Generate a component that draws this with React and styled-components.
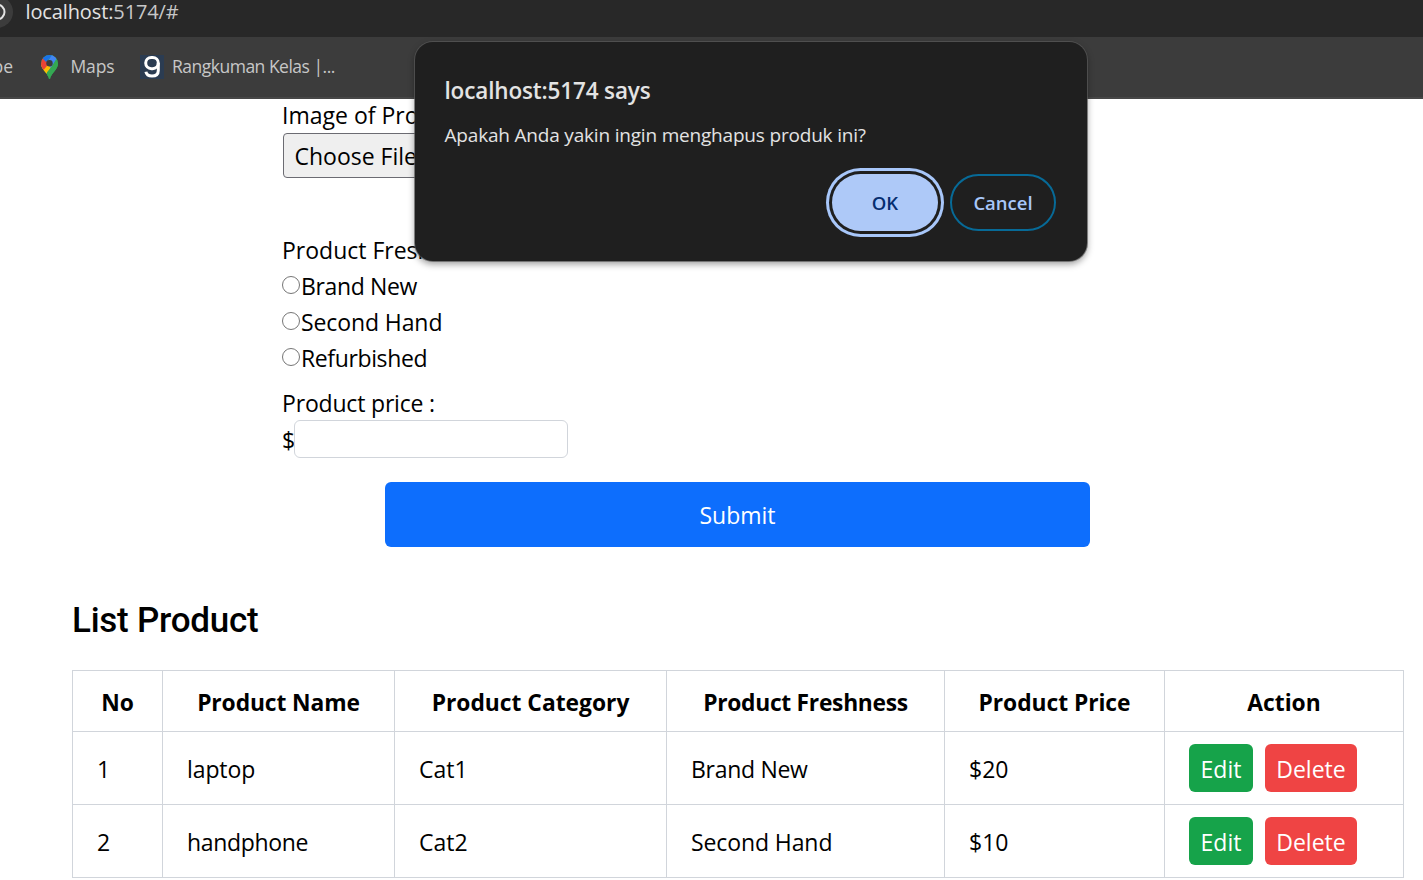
import React from "react";
import styled, { createGlobalStyle } from "styled-components";

const Global = createGlobalStyle`
  *, *::before, *::after { box-sizing: border-box; }
  body { margin: 0; background: #fff; overflow: hidden; }
`;

const Screen = styled.div`
  position: relative;
  width: 1423px;
  height: 880px;
  overflow: hidden;
  background: #fff;
  color: #000;
  font-family: "Open Sans", "Noto Sans", sans-serif;
  font-size: 23px;
  line-height: 36px;
`;

const T = styled.span`
  letter-spacing: ${(p) => p.$ls || 0}px;
  white-space: nowrap;
`;

const AddressBar = styled.div`
  display: flex;
  align-items: flex-start;
  height: 37px;
  background: #282828;
`;

const SiteInfo = styled.div`
  flex: none;
  width: 32px;
  height: 32px;
  margin: -4px 12.5px 0 -19px;
  border-radius: 50%;
  background: #3c3c3c;
  svg { display: block; }
`;

const Url = styled.div`
  font-size: 20px;
  line-height: 24px;
  color: #c7c7c7;
  b { font-weight: 400; color: #e3e3e3; }
`;

const Bookmarks = styled.div`
  display: flex;
  align-items: center;
  height: 62px;
  padding-bottom: 2px;
  background: #3c3c3c;
  border-bottom: 2px solid #474747;
  font-size: 17.5px;
  color: #c7c7c7;
`;

const Bookmark = styled.div`
  display: flex;
  align-items: center;
  flex: none;
  width: ${(p) => p.$w}px;
  margin-left: ${(p) => p.$left || 0}px;
  gap: ${(p) => p.$gap || 0}px;
  line-height: 28px;
  svg { display: block; flex: none; margin-top: 1px; }
`;

const Form = styled.form`
  margin: 0 0 0 282px;
  height: 383px;
`;

const Line = styled.div`
  display: flex;
  height: ${(p) => p.$h || 36}px;
  margin-top: ${(p) => p.$mt || 0}px;
  line-height: ${(p) => p.$lh || 35}px;
`;

const FileButton = styled.button`
  display: block;
  width: 150px;
  height: 45px;
  margin-left: 1px;
  padding: 1px 0 0 10.5px;
  border: 1px solid #6b6b72;
  border-radius: 4px;
  background: #efefef;
  color: #000;
  font: inherit;
  text-align: left;
`;

const Radio = styled.span`
  flex: none;
  width: 18px;
  height: 18px;
  margin: 7px 1px 0 0;
  border: 1.5px solid #767676;
  border-radius: 50%;
`;

const PriceInput = styled.input`
  width: 274px;
  height: 38px;
  border: 1px solid #d1d5db;
  border-radius: 6px;
  background: #fff;
`;

const Submit = styled.button`
  display: block;
  width: 705px;
  height: 65px;
  margin-left: 385px;
  padding: 0;
  border: 0;
  border-radius: 6px;
  background: #0d6efd;
  color: #fff;
  font: inherit;
`;

const Heading = styled.h2`
  margin: 53px 0 0 72px;
  height: 70px;
  font: 500 35px/42px Roboto, sans-serif;
`;

const Table = styled.table`
  width: 1332px;
  margin-left: 72px;
  table-layout: fixed;
  border-collapse: collapse;
`;

const Th = styled.th`
  height: 61px;
  padding: 3px 0 0;
  border: 1px solid #d1d5db;
  font-weight: 700;
  font-size: 22.8px;
  text-align: center;
`;

const Td = styled.td`
  height: 73px;
  padding: 2px 0 0 24px;
  border: 1px solid #d1d5db;
`;

const ActionTd = styled(Td)`
  padding-top: 0;
`;

const Actions = styled.div`
  display: flex;
  gap: 12px;
`;

const ActionButton = styled.button`
  width: ${(p) => p.$w}px;
  height: 48px;
  padding: 1px 0 0;
  border: 0;
  border-radius: 6px;
  background: ${(p) => p.$bg};
  color: #fff;
  font: inherit;
  line-height: 36px;
`;

const Dialog = styled.div`
  position: absolute;
  left: 415px;
  top: 42px;
  width: 672px;
  height: 219px;
  padding: 34px 31px 0 29.5px;
  border-radius: 18px;
  background: #1f1f1f;
  color: #e3e3e3;
  box-shadow: 0 0 0 1px rgba(90, 90, 90, 0.7), 0 3px 7px rgba(0, 0, 0, 0.4);
`;

const DialogTitle = styled.div`
  font-size: 22.5px;
  font-weight: 600;
  line-height: 30px;
`;

const DialogText = styled.div`
  margin-top: 15px;
  font-size: 19px;
  line-height: 28px;
`;

const DialogButtons = styled.div`
  display: flex;
  justify-content: flex-end;
  gap: 12px;
  margin-top: 25px;
`;

const Pill = styled.button`
  width: 106px;
  height: 57px;
  padding: 0;
  border: ${(p) => (p.$primary ? "0" : "2px solid #076a97")};
  border-radius: 29px;
  background: ${(p) => (p.$primary ? "#aec9f8" : "transparent")};
  color: ${(p) => (p.$primary ? "#062e6f" : "#a8c7fa")};
  box-shadow: ${(p) => (p.$primary ? "0 0 0 3px #1f1f1f, 0 0 0 6px #a8c7fa" : "none")};
  font-family: inherit;
  font-size: 18.5px;
  font-weight: 600;
`;

const radios = [
  ["Brand New", -0.35],
  ["Second Hand", -0.1],
  ["Refurbished", -0.38],
];

const columns = [
  ["No", 90, 0],
  ["Product Name", 232, -0.1],
  ["Product Category", 272, 0],
  ["Product Freshness", 278, -0.28],
  ["Product Price", 220, -0.05],
  ["Action", 239, 0],
];

const rows = [
  [["1", 0], ["laptop", -0.1], ["Cat1", 0], ["Brand New", -0.3], ["$20", 0]],
  [["2", 0], ["handphone", -0.33], ["Cat2", 0], ["Second Hand", -0.1], ["$10", 0]],
];

function MapsPin() {
  return (
    <svg width="17" height="24" viewBox="0 0 17 24">
      <defs>
        <clipPath id="pin">
          <path d="M8.5 0A8.5 8.5 0 0 0 0 8.5c0 3 1.300 4.900 3.100 7.200C5.500 18.700 7 20.500 7.600 23.200c.3 1.100 1.500 1.100 1.800 0 .6-2.700 2.100-4.500 4.500-7.500C15.700 13.400 17 11.500 17 8.500A8.500 8.500 0 0 0 8.500 0Z" />
        </clipPath>
      </defs>
      <g clipPath="url(#pin)">
        <path fill="#34a853" d="M0 0h17v24H0z" />
        <path fill="#fbbc04" d="M-2 12 5 5l7 7-9 9z" />
        <path fill="#ea4335" d="m-2 4 4-2 6.500 6-6 7L-2 10z" />
        <path fill="#1a73e8" d="M1.500 3.200 5-2h7l-1 3-6 6z" />
        <path fill="#4285f4" d="m11.500-1 6 5-8 9-3-6z" />
        <path fill="#34a853" d="m15.600 3.500 4 2-3 16H6v-4.200L11 11z" />
      </g>
      <circle cx="8.500" cy="8.300" r="3.200" fill="#3c3c3c" />
    </svg>
  );
}

function GIcon() {
  return (
    <svg width="24" height="24" viewBox="0 0 24 24" fill="none">
      <path fill="#2b3c52" d="M0 0h24v24H0z" />
      <rect x="5.700" y="2.500" width="12.600" height="11.200" rx="5.600" stroke="#fff" strokeWidth="3" />
      <path d="M18.300 8v7.500c0 3.700-2.500 5.600-6.300 5.600-3.400 0-5.600-1.500-6.100-4.300" stroke="#fff" strokeWidth="3" />
    </svg>
  );
}

export default function App() {
  return (
    <Screen>
      <Global />
      <AddressBar>
        <SiteInfo>
          <svg width="32" height="32" viewBox="0 0 32 32">
            <circle cx="16" cy="16" r="7.500" fill="none" stroke="#e3e3e3" strokeWidth="2" />
          </svg>
        </SiteInfo>
        <Url>
          <T $ls={-0.12}><b>localhost:</b>5174/#</T>
        </Url>
      </AddressBar>
      <Bookmarks>
        <Bookmark $left={-7.5} $w={48.5}><T>be</T></Bookmark>
        <Bookmark $w={99} $gap={12.5}><MapsPin /><T $ls={-0.15}>Maps</T></Bookmark>
        <Bookmark $w={220} $gap={8}><GIcon /><T $ls={-0.5}>Rangkuman Kelas |...</T></Bookmark>
      </Bookmarks>

      <Form>
        <Line $h={34} $lh={33}><T>Image of Product :</T></Line>
        <FileButton type="button"><T>Choose File</T></FileButton>
        <Line $mt={55}><T>Product Freshness :</T></Line>
        {radios.map(([label, ls]) => (
          <Line key={label}><Radio /><T $ls={ls}>{label}</T></Line>
        ))}
        <Line $mt={9} $h={34}><T $ls={-0.18}>Product price :</T></Line>
        <Line $h={38} $lh={40}><T $ls={-1}>$</T><PriceInput /></Line>
      </Form>
      <Submit><T>Submit</T></Submit>

      <Heading><T $ls={-0.25}>List Product</T></Heading>
      <Table>
        <colgroup>
          {columns.map(([name, w]) => <col key={name} width={w} />)}
        </colgroup>
        <thead>
          <tr>
            {columns.map(([name, , ls]) => <Th key={name}><T $ls={ls}>{name}</T></Th>)}
          </tr>
        </thead>
        <tbody>
          {rows.map((cells) => (
            <tr key={cells[0][0]}>
              {cells.map(([text, ls]) => <Td key={text}><T $ls={ls}>{text}</T></Td>)}
              <ActionTd>
                <Actions>
                  <ActionButton $w={64} $bg="#16a34a"><T>Edit</T></ActionButton>
                  <ActionButton $w={92} $bg="#ef4444"><T>Delete</T></ActionButton>
                </Actions>
              </ActionTd>
            </tr>
          ))}
        </tbody>
      </Table>

      <Dialog>
        <DialogTitle><T $ls={-0.15}>localhost:5174 says</T></DialogTitle>
        <DialogText><T $ls={-0.19}>Apakah Anda yakin ingin menghapus produk ini?</T></DialogText>
        <DialogButtons>
          <Pill $primary><T>OK</T></Pill>
          <Pill><T>Cancel</T></Pill>
        </DialogButtons>
      </Dialog>
    </Screen>
  );
}
